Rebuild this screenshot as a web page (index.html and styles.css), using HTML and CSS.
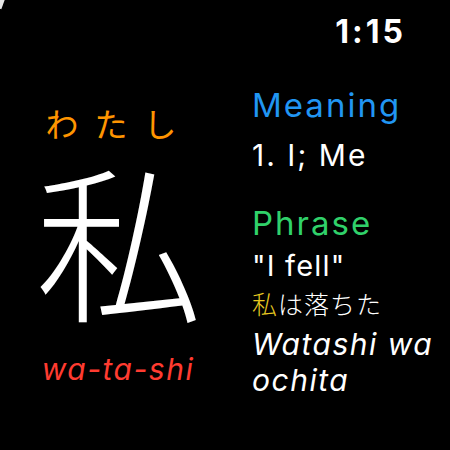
FILE: index.html
```html
<!DOCTYPE html>
<html>
<head>
<meta charset="utf-8">
<link rel="stylesheet" href="styles.css">
</head>
<body>
<div class="screen">
  <div class="corner"></div>
  <div class="status"><span class="time">1:15</span></div>
  <div class="main">
    <div class="left">
      <div class="kana">わたし</div>
      <div class="kanji">私</div>
      <div class="romaji">wa-ta-shi</div>
    </div>
    <div class="right">
      <div class="heading meaning">Meaning</div>
      <div class="line def">1. I; Me</div>
      <div class="heading phrase">Phrase</div>
      <div class="line quote">"I fell"</div>
      <div class="line jp"><span class="hl">私</span>は落ちた</div>
      <div class="line it">Watashi wa ochita</div>
    </div>
  </div>
</div>
</body>
</html>
```

FILE: styles.css
```css
html, body {
  margin: 0;
  padding: 0;
  background: #000;
}
.screen {
  width: 450px;
  height: 450px;
  background: #000;
  color: #fff;
  font-family: "Inter", "Noto Sans CJK JP", sans-serif;
  position: relative;
  overflow: hidden;
  display: flex;
  flex-direction: column;
}
.corner {
  position: absolute;
  left: -6px;
  top: -6px;
  width: 10px;
  height: 14px;
  background: #fff;
  transform: rotate(20deg);
  opacity: 0.9;
}
.status {
  display: flex;
  justify-content: flex-end;
  padding: 12px 44px 0 0;
  height: 40px;
}
.time {
  font-size: 32px;
  font-weight: 700;
  line-height: 40px;
  letter-spacing: 3px;
}
.main {
  display: flex;
}
.left {
  width: 236px;
  display: flex;
  flex-direction: column;
  align-items: center;
  padding-top: 51px;
}
.kana {
  font-family: "Noto Sans CJK JP", sans-serif;
  font-size: 33px;
  color: #FF9500;
  letter-spacing: 16px;
  line-height: 40px;
  margin-left: 2px;
}
.kanji {
  font-family: "Noto Sans CJK JP", sans-serif;
  font-size: 168px;
  font-weight: 300;
  line-height: 187px;
  margin-left: 2px;
}
.romaji {
  font-size: 30px;
  font-style: italic;
  color: #FF3B30;
  line-height: 36px;
  letter-spacing: 1.5px;
  margin-top: 21px;
}
.right {
  padding-left: 16px;
  padding-top: 33px;
  display: flex;
  flex-direction: column;
}
.heading {
  font-size: 33px;
  line-height: 40px;
  letter-spacing: 2px;
}
.meaning { color: #2196F3; }
.phrase { color: #30D16A; margin-top: 29px; }
.line {
  width: 190px;
}
.def {
  font-size: 30px;
  line-height: 38px;
  letter-spacing: 2px;
  margin-top: 11px;
}
.quote {
  font-size: 29px;
  line-height: 38px;
  letter-spacing: 1.2px;
  margin-top: 4px;
}
.jp {
  font-family: "Noto Sans CJK JP", sans-serif;
  font-size: 25px;
  line-height: 36px;
  font-weight: 300;
  letter-spacing: 1px;
}
.hl { color: #E6C820; }
.it {
  font-size: 30px;
  font-style: italic;
  line-height: 36px;
  letter-spacing: 1.5px;
  margin-top: 5px;
}
```
